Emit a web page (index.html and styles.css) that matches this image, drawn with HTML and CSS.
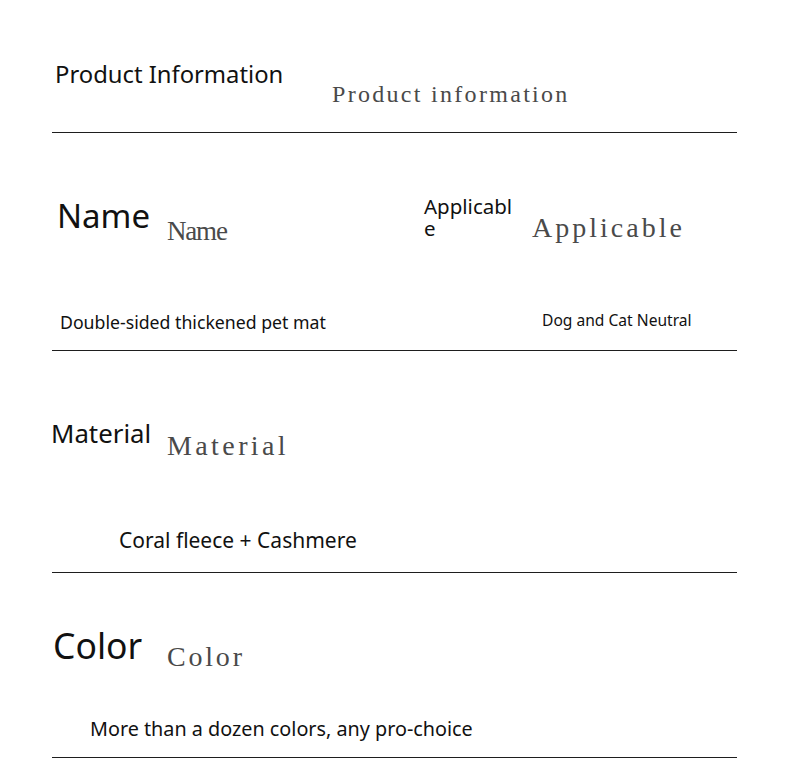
FILE: index.html
```html
<!DOCTYPE html>
<html lang="en">
<head>
<meta charset="utf-8">
<title>Product Information</title>
<link rel="stylesheet" href="styles.css">
</head>
<body>
<main class="sheet">
  <section class="sec sec-head">
    <div class="row">
      <h1 class="sans t-head">Product Information</h1>
      <span class="mono m-head">Product information</span>
    </div>
  </section>

  <section class="sec sec-name">
    <div class="row top">
      <div class="sans t-name">Name</div>
      <div class="mono m-name">Name</div>
      <div class="sans t-appl">Applicable</div>
      <div class="mono m-appl">Applicable</div>
    </div>
    <div class="row">
      <div class="sans v-name">Double-sided thickened pet mat</div>
      <div class="sans v-appl">Dog and Cat Neutral</div>
    </div>
  </section>

  <section class="sec sec-mat">
    <div class="row top">
      <div class="sans t-mat">Material</div>
      <div class="mono m-mat">Material</div>
    </div>
    <div class="row">
      <div class="sans v-mat">Coral fleece + Cashmere</div>
    </div>
  </section>

  <section class="sec sec-color">
    <div class="row top">
      <div class="sans t-color">Color</div>
      <div class="mono m-color">Color</div>
    </div>
    <div class="row">
      <div class="sans v-color">More than a dozen colors, any pro-choice</div>
    </div>
  </section>
</main>
</body>
</html>
```

FILE: styles.css
```css
html, body {
  margin: 0;
  padding: 0;
  background: #ffffff;
}

.sheet {
  width: 685px;
  margin-left: 52px;
}

.sec {
  box-sizing: border-box;
  border-bottom: 1px solid #1e1e1e;
}

.sec-head { height: 133px; }
.sec-name { height: 218px; }
.sec-mat { height: 222px; }
.sec-color { height: 185px; }

.row {
  display: flex;
  align-items: flex-start;
}

.row.top {
  height: 120px;
}

.sans {
  font-family: "Noto Sans", "Open Sans", sans-serif;
  color: #111111;
  line-height: 1;
  white-space: nowrap;
  font-weight: 400;
  margin: 0;
}

.mono {
  font-family: "Liberation Serif", "Times New Roman", serif;
  color: #4a4a4a;
  line-height: 1;
  white-space: nowrap;
}

/* header */
.t-head {
  font-size: 23.8px;
  margin-top: 63px;
  margin-left: 3px;
  width: 277px;
}
.m-head {
  font-size: 24px;
  letter-spacing: 2.3px;
  margin-top: 82px;
}

/* name / applicable */
.t-name {
  font-size: 33px;
  margin-top: 66px;
  margin-left: 5px;
  width: 110px;
}
.m-name {
  font-size: 27px;
  letter-spacing: -1.2px;
  margin-top: 85.4px;
  width: 257px;
}
.t-appl {
  font-size: 20.5px;
  line-height: 22px;
  margin-top: 62px;
  width: 95px;
  margin-right: 13px;
  white-space: normal;
  word-break: break-all;
}
.m-appl {
  font-size: 28px;
  letter-spacing: 3px;
  margin-top: 80.5px;
}
.v-name {
  font-size: 17.7px;
  margin-top: 61.3px;
  margin-left: 8px;
  width: 482px;
}
.v-appl {
  font-size: 15.6px;
  margin-top: 59.8px;
}

/* material */
.t-mat {
  font-size: 25.8px;
  margin-top: 70.4px;
  margin-left: -1px;
  width: 116px;
}
.m-mat {
  font-size: 28px;
  letter-spacing: 3.4px;
  margin-top: 80.5px;
}
.v-mat {
  font-size: 21px;
  margin-top: 58.7px;
  margin-left: 67px;
}

/* color */
.t-color {
  font-size: 35.5px;
  margin-top: 54.8px;
  margin-left: 1px;
  width: 114px;
}
.m-color {
  font-size: 28px;
  letter-spacing: 2.8px;
  margin-top: 70.2px;
}
.v-color {
  font-size: 19.8px;
  margin-top: 26px;
  margin-left: 38px;
}
```
